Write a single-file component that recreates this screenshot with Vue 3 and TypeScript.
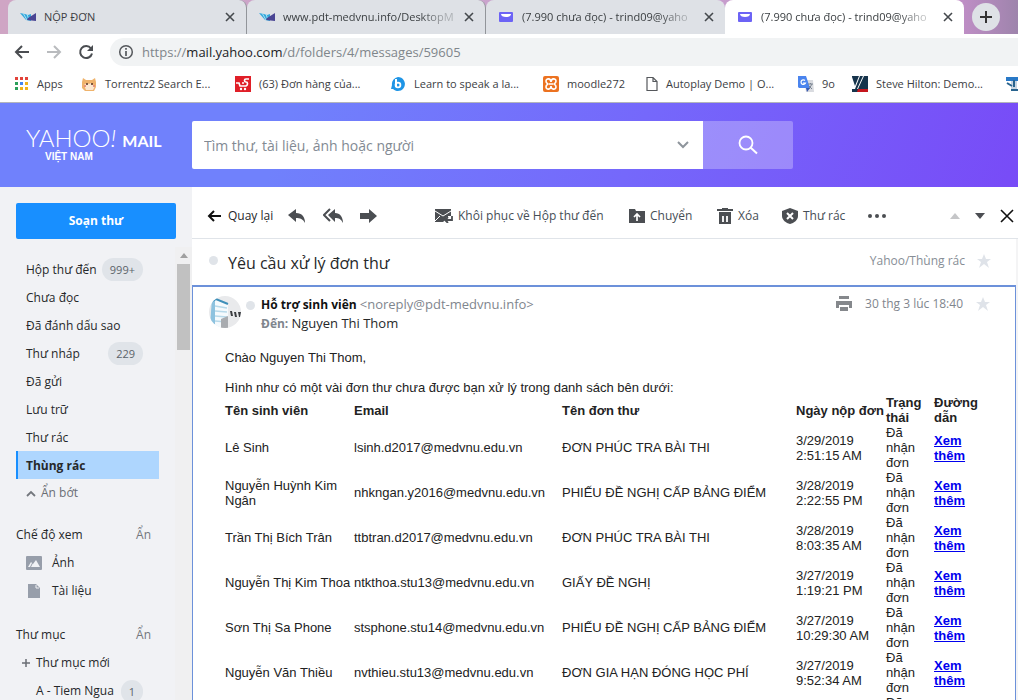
<script setup lang="ts">
import { ref } from 'vue'

interface Tab { title: string; icon: 'flag' | 'mail'; active?: boolean }
interface Folder { name: string; count?: string; active?: boolean }
interface Row { name: string; email: string; form: string; day: string; time: string }

const tabs: Tab[] = [
  { title: 'NỘP ĐƠN', icon: 'flag' },
  { title: 'www.pdt-medvnu.info/DesktopM', icon: 'flag' },
  { title: '(7.990 chưa đọc) - trind09@yaho', icon: 'mail' },
  { title: '(7.990 chưa đọc) - trind09@yaho', icon: 'mail', active: true },
]

const folders: Folder[] = [
  { name: 'Hộp thư đến', count: '999+' },
  { name: 'Chưa đọc' },
  { name: 'Đã đánh dấu sao' },
  { name: 'Thư nháp', count: '229' },
  { name: 'Đã gửi' },
  { name: 'Lưu trữ' },
  { name: 'Thư rác' },
  { name: 'Thùng rác', active: true },
]

const rows: Row[] = [
  { name: 'Lê Sinh', email: 'lsinh.d2017@medvnu.edu.vn', form: 'ĐƠN PHÚC TRA BÀI THI', day: '3/29/2019', time: '2:51:15 AM' },
  { name: 'Nguyễn Huỳnh Kim Ngân', email: 'nhkngan.y2016@medvnu.edu.vn', form: 'PHIẾU ĐỀ NGHỊ CẤP BẢNG ĐIỂM', day: '3/28/2019', time: '2:22:55 PM' },
  { name: 'Trần Thị Bích Trân', email: 'ttbtran.d2017@medvnu.edu.vn', form: 'ĐƠN PHÚC TRA BÀI THI', day: '3/28/2019', time: '8:03:35 AM' },
  { name: 'Nguyễn Thị Kim Thoa', email: 'ntkthoa.stu13@medvnu.edu.vn', form: 'GIẤY ĐỀ NGHỊ', day: '3/27/2019', time: '1:19:21 PM' },
  { name: 'Sơn Thị Sa Phone', email: 'stsphone.stu14@medvnu.edu.vn', form: 'PHIẾU ĐỀ NGHỊ CẤP BẢNG ĐIỂM', day: '3/27/2019', time: '10:29:30 AM' },
  { name: 'Nguyễn Văn Thiều', email: 'nvthieu.stu13@medvnu.edu.vn', form: 'ĐƠN GIA HẠN ĐÓNG HỌC PHÍ', day: '3/27/2019', time: '9:52:34 AM' },
  { name: '', email: '', form: '', day: '', time: '' },
]

const query = ref('')
</script>

<template>
  <div class="page">
    <header class="browser">
      <div class="tabs">
        <div v-for="(t, i) in tabs" :key="i" class="tab" :class="{ active: t.active, divided: i < 2 }">
          <svg v-if="t.icon === 'flag'" width="16" height="16" viewBox="0 0 16 16">
            <path d="M0 4l5 1 3 1 3-1v7l-5-1z" fill="#35a8dc" />
            <path d="M3 4l4 7M7 5l2 6" stroke="#a9dff3" />
            <path d="M8 9l8-5v8l-9-1z" fill="#4a4594" />
          </svg>
          <svg v-else width="16" height="16" viewBox="0 0 16 16">
            <rect x="1" y="3" width="14" height="10" rx="1" fill="#6c63f5" />
            <path d="M3 5h10c0 2-2 3-5 3S3 7 3 5z" fill="#fff" />
          </svg>
          <span class="tab-title">{{ t.title }}</span>
          <button class="plain tab-close" aria-label="Close">
            <svg width="10" height="10" viewBox="0 0 10 10"><path d="M1 1l8 8M9 1l-8 8" stroke="#45494d" stroke-width="1.6" /></svg>
          </button>
        </div>
        <button class="plain new-tab" aria-label="New tab">
          <svg width="12" height="12" viewBox="0 0 12 12"><path d="M6 0v12M0 6h12" stroke="#333" stroke-width="2" /></svg>
        </button>
      </div>

      <div class="nav">
        <button class="plain" aria-label="Back">
          <svg width="16" height="16" viewBox="0 0 16 16"><path d="M15 8H2M8 2L2 8l6 6" fill="none" stroke="#4a4d51" stroke-width="2" /></svg>
        </button>
        <button class="plain" aria-label="Forward">
          <svg width="16" height="16" viewBox="0 0 16 16"><path d="M1 8h13M8 2l6 6-6 6" fill="none" stroke="#b9bbbe" stroke-width="2" /></svg>
        </button>
        <button class="plain" aria-label="Reload">
          <svg width="16" height="16" viewBox="0 0 16 16"><path d="M13 4.500A6 6 0 1 0 14 9.500" fill="none" stroke="#4a4d51" stroke-width="2" /><path d="M15 1v6H9z" fill="#4a4d51" /></svg>
        </button>
        <div class="address">
          <svg width="16" height="16" viewBox="0 0 16 16"><circle cx="8" cy="8" r="6.300" fill="none" stroke="#55585c" stroke-width="1.500" /><path d="M8 7v5M8 4v1.800" stroke="#55585c" stroke-width="1.700" /></svg>
          <span>https://<b>mail.yahoo.com</b>/d/folders/4/messages/59605</span>
        </div>
      </div>

      <nav class="bookmarks">
        <a href="#" class="bm-apps">
          <svg width="14" height="14" viewBox="0 0 14 14">
            <path d="M0 0h3v3H0zM5 0h3v3H5zM10 0h3v3h-3z" fill="#e2433a" />
            <path d="M0 5h3v3H0z" fill="#2b9f5a" /><path d="M5 5h3v3H5z" fill="#4285f4" /><path d="M10 5h3v3h-3zM5 10h3v3H5zM10 10h3v3h-3z" fill="#f0b21c" /><path d="M0 10h3v3H0z" fill="#2b9f5a" />
          </svg>
          <span>Apps</span>
        </a>
        <a href="#" class="bm-torrent">
          <svg width="16" height="16" viewBox="0 0 16 16">
            <path d="M1 6l1-4 3 2h6l3-2 1 4v5l-2 4H4L1 12z" fill="#efb36c" />
            <path d="M3 9l3-2 2 1 2-1 4 3-2 4H5z" fill="#fbe7cf" />
            <circle cx="6" cy="8" r="1" fill="#552c1b" /><circle cx="11" cy="8" r="1" fill="#552c1b" /><circle cx="4" cy="10" r="1" fill="#e67b6a" /><circle cx="13" cy="10" r="1" fill="#e67b6a" />
          </svg>
          <span>Torrentz2 Search E...</span>
        </a>
        <a href="#" class="bm-orders">
          <svg width="16" height="16" viewBox="0 0 16 16">
            <rect width="16" height="16" fill="#e01f28" />
            <path d="M14 3h-3c-2 0-2 3 0 3s2 3 0 4H5L4 7H1M7 7h2" fill="none" stroke="#fff" stroke-width="1.700" /><circle cx="6" cy="13" r="1.200" fill="#fff" /><circle cx="10" cy="13" r="1.200" fill="#fff" />
          </svg>
          <span>(63) Đơn hàng của...</span>
        </a>
        <a href="#" class="bm-learn">
          <svg width="16" height="16" viewBox="0 0 16 16">
            <path d="M8 1a7 7 0 1 1-5 12H1l1-4A7 7 0 0 1 8 1z" fill="#1f95e6" />
            <path d="M6 3v8" stroke="#fff" stroke-width="2" /><circle cx="8" cy="9" r="2.400" fill="none" stroke="#fff" stroke-width="1.800" />
          </svg>
          <span>Learn to speak a la...</span>
        </a>
        <a href="#" class="bm-moodle">
          <svg width="16" height="16" viewBox="0 0 16 16">
            <rect width="16" height="16" rx="2" fill="#ec7220" />
            <path d="M8 6c0-4-5-4-5-1 0 2 1 2 2 3-1 1-2 1-2 3 0 3 5 3 5-1 0 4 5 4 5 1 0-2-1-2-2-3 1-1 2-1 2-3 0-3-5-3-5 1zM6 8h4" fill="none" stroke="#fff" stroke-width="1.600" />
          </svg>
          <span>moodle272</span>
        </a>
        <a href="#" class="bm-autoplay">
          <svg width="12" height="16" viewBox="0 0 12 16"><path d="M1 1.500h6l4 4v9H1zM7 1.500v4h4" fill="#fff" stroke="#55585c" stroke-width="1.200" /></svg>
          <span>Autoplay Demo | O...</span>
        </a>
        <a href="#" class="bm-translate">
          <svg width="16" height="16" viewBox="0 0 16 16">
            <path d="M6 4h9l1 12H8z" fill="#d9dbe0" /><path d="M0 0h8l4 12H1L0 11z" fill="#4a84ee" />
            <path d="M7 4.500A2.300 2.300 0 1 0 7.500 7H5" fill="none" stroke="#fff" stroke-width="1.200" /><path d="M10 8h5M12.500 7v1M14 8l-3 5M11 10l3 3" stroke="#7b8592" />
            <path d="M8 12h4l-3 4z" fill="#3457b0" />
          </svg>
          <span>9o</span>
        </a>
        <a href="#" class="bm-steve">
          <svg width="16" height="16" viewBox="0 0 16 16"><rect width="16" height="16" fill="#16344c" /><path d="M0 1l3 9L7 0h1L3 13H0zM11 0h1L6 13H5z" fill="#fff" /><path d="M6 13h10v3H5z" fill="#c5161d" /></svg>
          <span>Steve Hilton: Demo...</span>
        </a>
        <a href="#" class="bm-last" aria-label="Bookmark">
          <svg width="16" height="16" viewBox="0 0 16 16"><path d="M0 1h16v4H0z" fill="#2979c7" /><path d="M5 5h6v10H5z" fill="#c7d5e2" /><path d="M8 4v7M5 14h7M1 7l5 3" stroke="#28638e" stroke-width="2" /></svg>
        </a>
      </nav>
    </header>

    <div class="banner">
      <div class="logo">
        <div class="logo-line"><span class="yahoo">YAHOO<i>!</i></span><span class="mail">MAIL</span></div>
        <span class="country">VIỆT NAM</span>
      </div>
      <form class="search" @submit.prevent>
        <div class="search-box">
          <input v-model="query" type="text" aria-label="Tìm kiếm" placeholder="Tìm thư, tài liệu, ảnh hoặc người" />
          <button type="button" class="plain" aria-label="Tùy chọn">
            <svg width="12" height="8" viewBox="0 0 12 8"><path d="M1 1l5 5 5-5" fill="none" stroke="#8e959c" stroke-width="2" /></svg>
          </button>
        </div>
        <button type="submit" class="plain search-go" aria-label="Tìm">
          <svg width="20" height="20" viewBox="0 0 20 20"><circle cx="8" cy="8" r="6.500" fill="none" stroke="#fff" stroke-width="1.800" /><path d="M12.500 12.500l6.500 6" stroke="#fff" stroke-width="2" /></svg>
        </button>
      </form>
    </div>

    <div class="body">
      <aside class="side">
        <button class="plain compose">Soạn thư</button>
        <div class="side-scroll">
          <div class="side-list">
            <a v-for="f in folders" :key="f.name" href="#" class="folder" :class="{ active: f.active }">
              <span class="folder-name">{{ f.name }}</span><span v-if="f.count" class="count">{{ f.count }}</span>
            </a>
            <button class="plain less">
              <svg width="10" height="7" viewBox="0 0 10 7"><path d="M1 6l4-4 4 4" fill="none" stroke="#73777d" stroke-width="1.800" /></svg>
              Ẩn bớt
            </button>
            <div class="group"><span>Chế độ xem</span><button class="plain hide">Ẩn</button></div>
            <a href="#" class="view">
              <svg width="16" height="14" viewBox="0 0 16 14"><rect width="16" height="14" rx="1" fill="#979eaa" /><path d="M2 11l3-5 2 2 3-4 4 7z" fill="#f1f2f5" /><path d="M7 6l-3 6" stroke="#979eaa" /></svg>
              Ảnh
            </a>
            <a href="#" class="view">
              <svg width="16" height="14" viewBox="0 0 16 14"><path d="M2 0h8l4 4v10H2z" fill="#979eaa" /><path d="M10 1v3h3" fill="none" stroke="#f1f2f5" /></svg>
              Tài liệu
            </a>
            <div class="group"><span>Thư mục</span><button class="plain hide">Ẩn</button></div>
            <button class="plain new-folder">
              <svg width="10" height="10" viewBox="0 0 10 10"><path d="M5 1v8M1 5h8" stroke="#6a6e74" stroke-width="1.500" /></svg>
              Thư mục mới
            </button>
            <a href="#" class="folder sub"><span>A - Tiem Ngua</span><span class="count">1</span></a>
          </div>
          <div class="bar" aria-hidden="true">
            <svg width="8" height="5" viewBox="0 0 8 5"><path d="M0 5l4-5 4 5z" fill="#a0a0a0" /></svg>
            <div class="thumb"></div>
          </div>
        </div>
      </aside>

      <main class="main">
        <div class="tools">
          <button class="plain back">
            <svg width="14" height="12" viewBox="0 0 14 12"><path d="M14 6H2M7 1L2 6l5 5" fill="none" stroke="#111" stroke-width="2" /></svg>
            Quay lại
          </button>
          <button class="plain reply" aria-label="Trả lời">
            <svg width="18" height="16" viewBox="0 0 18 16"><path d="M8 1v4c6 0 9 4 9 10-2-4-5-5-9-5v4L0 7z" fill="#4b4e52" /></svg>
          </button>
          <button class="plain reply-all" aria-label="Trả lời tất cả">
            <svg width="20" height="16" viewBox="0 0 20 16"><path d="M12 1v4c5 0 8 4 8 10-2-4-4-5-8-5v4L5 7z" fill="#4b4e52" /><path d="M7 1L1 7l6 6" fill="none" stroke="#4b4e52" stroke-width="2" /></svg>
          </button>
          <button class="plain forward" aria-label="Chuyển tiếp">
            <svg width="18" height="14" viewBox="0 0 18 14"><path d="M0 4h9V0l8 7-8 7v-4H0z" fill="#4b4e52" /></svg>
          </button>
          <button class="plain restore">
            <svg width="18" height="14" viewBox="0 0 18 14"><path d="M0 0h16v7h-3v2l-5 4H0z" fill="#4b4e52" /><path d="M0 2l8 5 8-5M0 12l5-5" fill="none" stroke="#fff" /><path d="M8 14l4-6h6v6z" fill="#fff" /><path d="M17 7v4h-6M13 8l-3 3 3 3" stroke="#4b4e52" fill="none" stroke-width="1.800" /></svg>
            Khôi phục về Hộp thư đến
          </button>
          <button class="plain move">
            <svg width="16" height="14" viewBox="0 0 16 14"><path d="M0 0h6l1 2h9v12H0z" fill="#4b4e52" /><path d="M8 12V6M5 8l3-3 3 3" fill="none" stroke="#fff" stroke-width="1.700" /></svg>
            Chuyển
          </button>
          <button class="plain trash">
            <svg width="16" height="16" viewBox="0 0 16 16"><path d="M0 1h5V0h6v1h5v2H0zM2 4h12v12H2z" fill="#4b4e52" /><path d="M6 8v6M10 8v6" stroke="#fff" stroke-width="1.800" /></svg>
            Xóa
          </button>
          <button class="plain spam">
            <svg width="16" height="16" viewBox="0 0 16 16"><path d="M8 0l8 3v5c0 4-4 7-8 8-4-1-8-4-8-8V3z" fill="#4b4e52" /><path d="M5 5l6 6M11 5l-6 6" stroke="#fff" stroke-width="2" /></svg>
            Thư rác
          </button>
          <button class="plain more" aria-label="Thêm">
            <svg width="20" height="4" viewBox="0 0 20 4"><circle cx="3" cy="2" r="2" fill="#4b4e52" /><circle cx="10" cy="2" r="2" fill="#4b4e52" /><circle cx="17" cy="2" r="2" fill="#4b4e52" /></svg>
          </button>
          <div class="pager">
            <button class="plain" aria-label="Thư trước"><svg width="10" height="6" viewBox="0 0 10 6"><path d="M0 6l5-6 5 6z" fill="#c5c6c8" /></svg></button>
            <button class="plain" aria-label="Thư sau"><svg width="10" height="6" viewBox="0 0 10 6"><path d="M0 0l5 6 5-6z" fill="#4b4e52" /></svg></button>
            <button class="plain" aria-label="Đóng"><svg width="14" height="14" viewBox="0 0 14 14"><path d="M1 1l12 12M13 1L1 13" stroke="#111" stroke-width="1.600" /></svg></button>
          </div>
        </div>

        <div class="reader">
          <div class="subject">
            <span class="dot"></span>
            <h1>Yêu cầu xử lý đơn thư</h1>
            <span class="where">Yahoo/Thùng rác</span>
            <button class="plain" aria-label="Gắn sao"><svg width="14" height="14" viewBox="0 0 14 14"><path d="M7 0l2 5h5l-4 3 2 6-5-4-5 4 2-6-4-3h5z" fill="#dfe3e9" /></svg></button>
          </div>

          <article class="message">
            <div class="msg-head">
              <svg class="avatar" width="34" height="34" viewBox="0 0 34 34">
                <defs><clipPath id="round"><circle cx="17" cy="17" r="16" /></clipPath></defs>
                <g clip-path="url(#round)">
                  <rect width="34" height="34" fill="#e9eaec" />
                  <path d="M6 4l14 4v24H4z" fill="#f5fafd" />
                  <path d="M4 3l3 1v27H2z" fill="#8dc2df" />
                  <path d="M4 6l4-2 12 5" fill="none" stroke="#3e8fb9" stroke-width="2" />
                  <path d="M7 11l12 2M7 16l12 1M7 21l12 1M7 26l12 1" stroke="#b7d9ea" stroke-width="1.500" />
                  <path d="M13 24l7-3v13h-7z" fill="#a9acb0" />
                </g>
                <path d="M22 16h2l1 5h-2zM26 17h2l1 5h-2zM30 17h3l-1 5h-1z" fill="#3a3c40" />
              </svg>
              <span class="dot"></span>
              <div class="people">
                <div><strong>Hỗ trợ sinh viên</strong> <span class="addr">&lt;noreply@pdt-medvnu.info&gt;</span></div>
                <div><b class="to">Đến:</b> <span class="recipient">Nguyen Thi Thom</span></div>
              </div>
              <div class="meta">
                <button class="plain" aria-label="In"><svg width="16" height="16" viewBox="0 0 16 16"><path d="M3 0h10v3H3zM0 5h16v7h-3V9H3v3H0zM4 11h8v4H4z" fill="#85888c" /></svg></button>
                <time>30 thg 3 lúc 18:40</time>
                <button class="plain" aria-label="Gắn sao"><svg width="14" height="14" viewBox="0 0 14 14"><path d="M7 0l2 5h5l-4 3 2 6-5-4-5 4 2-6-4-3h5z" fill="#dfe3e9" /></svg></button>
              </div>
            </div>

            <div class="content">
              <p>Chào Nguyen Thi Thom,</p>
              <p>Hình như có một vài đơn thư chưa được bạn xử lý trong danh sách bên dưới:</p>
              <table>
                <colgroup><col class="c-name" /><col class="c-mail" /><col class="c-form" /><col class="c-date" /><col class="c-state" /><col class="c-link" /></colgroup>
                <thead>
                  <tr><th>Tên sinh viên</th><th>Email</th><th>Tên đơn thư</th><th class="one-line">Ngày nộp đơn</th><th>Trạng thái</th><th>Đường dẫn</th></tr>
                </thead>
                <tbody>
                  <tr v-for="(r, i) in rows" :key="i">
                    <td>{{ r.name }}</td><td>{{ r.email }}</td><td>{{ r.form }}</td>
                    <td>{{ r.day }} {{ r.time }}</td><td>Đã nhận đơn</td>
                    <td><a href="#">Xem thêm</a></td>
                  </tr>
                </tbody>
              </table>
            </div>
          </article>
        </div>
      </main>
    </div>
  </div>
</template>

<style>
body { overflow: hidden; }
</style>

<style scoped>
.page { height: 100vh; overflow: hidden; display: flex; flex-direction: column; background: #fff; color: #26282a; font: 12px/18px "Open Sans", "Noto Sans", sans-serif; }
.page * { box-sizing: border-box; }
.plain { border: 0; margin: 0; padding: 0; background: none; font: inherit; color: inherit; display: flex; align-items: center; justify-content: center; white-space: nowrap; }
a { color: inherit; text-decoration: none; }
svg { flex: none; display: block; }

.browser { flex: none; border-bottom: 1px solid #b3b5bb; }
.tabs { display: flex; height: 34px; padding-left: 8px; background: linear-gradient(90deg, #cfa5c4, #c9a3cf 60%, #c28fc8 94%, #9e84ac); }
.tab { flex: 0 1 239px; min-width: 0; display: flex; align-items: center; gap: 8px; padding: 0 8px 0 12px; background: #dee1e6; border-radius: 8px 8px 0 0; color: #3c4043; font-size: 11px; }
.tab.divided { border-right: 1px solid #92959a; }
.tab.active { background: #fff; }
.tab-title { flex: 1; white-space: nowrap; mask-image: linear-gradient(90deg, #000 80%, rgba(0, 0, 0, .3) 95%); }
.tab:first-child .tab-title { mask-image: none; }
.tab-close { width: 16px; height: 16px; }
.new-tab { width: 28px; height: 28px; margin: 3px 0 0 8px; border-radius: 50%; background: #dee1e6; }

.nav { display: flex; align-items: center; gap: 16px; height: 35px; padding-left: 14px; }
.address { flex: 1; display: flex; align-items: center; gap: 8px; height: 28px; padding-left: 8px; border-radius: 14px 0 0 14px; background: #f1f3f4; color: #80868b; font-size: 13px; }
.address b { color: #202124; font-weight: 400; }

.bookmarks { display: flex; height: 33px; padding: 0 0 3px 15px; color: #3c4043; white-space: nowrap; overflow: hidden; font-size: 11px; }
.bookmarks a { flex: none; display: flex; align-items: center; gap: 8px; }
.bm-apps { width: 66px; }
.bm-torrent { width: 154px; }
.bm-orders { width: 155px; }
.bm-learn { width: 153px; }
.bm-moodle { width: 103px; }
.bm-autoplay { width: 152px; }
.bm-translate { width: 54px; }
.bm-steve { width: 154px; }

.banner { flex: none; display: flex; align-items: center; height: 84px; background: linear-gradient(110deg, #7081fc 0%, #7081fc 28%, #7568fb 62%, #784bf7 100%); color: #fff; }
.logo { flex: none; width: 192px; padding-left: 26px; }
.logo-line { display: flex; align-items: baseline; gap: 6px; height: 24px; line-height: 22px; }
.yahoo { font-family: Lato, sans-serif; font-weight: 300; font-size: 24px; }
.mail { font-family: Lato, sans-serif; font-weight: 700; font-size: 16px; }
.country { display: block; padding-left: 19px; font: bold 10px/12px "Liberation Sans", sans-serif; }
.search { display: flex; flex: 0 1 601px; height: 48px; }
.search-box { flex: 1; display: flex; align-items: center; padding: 0 14px 0 12px; background: #fff; border-radius: 2px 0 0 2px; }
.search-box input { flex: 1; min-width: 0; border: 0; outline: 0; padding: 2px 0 0; background: none; color: #26282a; font: 14px/20px "Open Sans", sans-serif; }
.search-box input::placeholder { color: #828a93; opacity: 1; }
.search-go { width: 90px; background: rgba(255, 255, 255, .28); border-radius: 0 2px 2px 0; }

.body { flex: 1; min-height: 0; display: flex; }
.side { flex: none; width: 192px; display: flex; flex-direction: column; padding-top: 16px; background: #f1f2f5; }
.compose { flex: none; width: 160px; height: 36px; margin-left: 16px; border-radius: 2px; background: #188fff; color: #fff; font-weight: 700; }
.side-scroll { flex: 1; min-height: 0; display: flex; justify-content: space-between; margin-top: 8px; }
.side-list { width: 159px; padding: 8px 0 0 16px; }
.folder { display: flex; align-items: center; justify-content: space-between; height: 28px; padding: 0 16px 0 10px; white-space: nowrap; }
.folder.active { padding-left: 8px; border-left: 2px solid #188fff; background: #aed6fe; font-weight: 700; }
.folder.sub { padding-left: 20px; }
.folder-name { padding-top: 2px; }
.count { flex: none; min-width: 22px; height: 23px; padding: 0 8px; border-radius: 12px; background: #e0e4e9; color: #5b636a; font-size: 11px; line-height: 23px; text-align: center; }
.less { height: 28px; padding-left: 10px; gap: 5px; color: #6a6e74; }
.group { display: flex; justify-content: space-between; align-items: center; height: 28px; margin-top: 14px; padding-right: 8px; }
.view + .group { margin-top: 16px; }
.hide { color: #73777d; }
.view { display: flex; align-items: center; gap: 10px; height: 28px; padding-left: 10px; }
.new-folder { height: 28px; padding-left: 5px; gap: 5px; }
.bar { width: 17px; padding: 6px 2px 0; background: #f0f0f1; display: flex; flex-direction: column; align-items: center; gap: 6px; }
.thumb { width: 13px; height: 86px; background: #c1c1c1; }

.main { flex: 1; min-width: 0; display: flex; flex-direction: column; }
.tools { flex: none; display: flex; align-items: center; height: 52px; padding: 6px 4px 0 15px; border-bottom: 1px solid #e0e4e9; color: #464e56; }
.tools button { gap: 5px; }
.tools .back { width: 67px; gap: 7px; justify-content: flex-start; color: #26282a; }
.reply { margin-left: 14px; }
.reply-all { margin-left: 17px; }
.forward { margin-left: 17px; }
.restore { margin-left: 57px; width: 172px; justify-content: flex-start; }
.move { margin-left: 22px; width: 66px; justify-content: flex-start; }
.trash { margin-left: 22px; width: 44px; justify-content: flex-start; }
.spam { margin-left: 21px; width: 66px; justify-content: flex-start; }
.more { margin-left: 19px; }
.pager { display: flex; align-items: center; gap: 15px; margin-left: auto; }

.reader { flex: 1; min-height: 0; display: flex; flex-direction: column; padding-right: 2px; background: #f4f4f5; }
.subject { flex: none; display: flex; align-items: center; height: 47px; padding: 0 25px 4px 17px; background: #fff; }
.dot { flex: none; width: 9px; height: 9px; border-radius: 50%; background: #e0e4e9; }
h1 { flex: 1; margin: 0 0 0 10px; padding-top: 4px; font-size: 16px; line-height: 24px; font-weight: 400; }
.where { margin-right: 12px; color: #878e96; }
.message { flex: 1; margin-top: -1px; border: solid #6c91da; border-width: 2px 1px 0; background: #fff; }
.msg-head { display: flex; align-items: flex-start; padding: 8px 25px 0 15px; }
.msg-head .dot { margin: 6px 6px 0 4px; }
.people { flex: 1; }
.people strong { color: #111; }
.addr, .recipient { font-size: 13px; }
.addr, .to, time { color: #7f868e; }
.meta { display: flex; align-items: center; gap: 13px; }
.content { padding: 17px 30px 0 32px; font: 13px/15px "Liberation Sans", Arial, sans-serif; color: #222; }
p { margin: 0 0 15px; }
p + p { margin: 0; }
table { width: 760px; table-layout: fixed; border-collapse: collapse; }
th, td { padding: 0; text-align: left; vertical-align: middle; }
.one-line { white-space: nowrap; }
td a { color: #00e; font-weight: 700; text-decoration: underline; }
.c-name { width: 129px; }
.c-mail { width: 208px; }
.c-form { width: 234px; }
.c-date { width: 90px; }
.c-state { width: 48px; }
.c-link { width: 51px; }
</style>
